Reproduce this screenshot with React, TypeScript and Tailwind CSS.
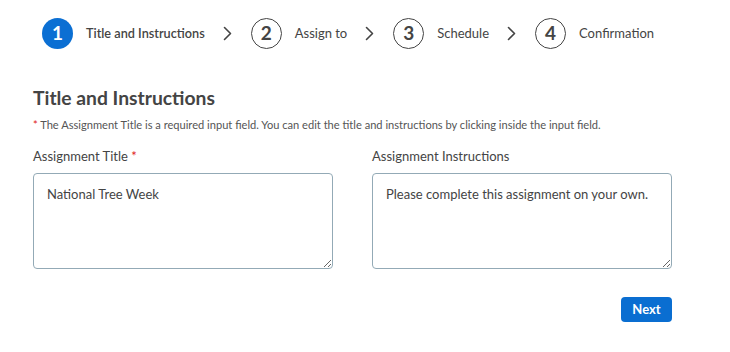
import React from 'react';

const steps = [
  { n: 1, label: 'Title and Instructions', active: true },
  { n: 2, label: 'Assign to', active: false },
  { n: 3, label: 'Schedule', active: false },
  { n: 4, label: 'Confirmation', active: false },
];

const Chevron = () => (
  <svg width="9" height="15" viewBox="0 0 9 15" className="ml-[18px] mr-[19px]">
    <path d="M1.5 1.5 L7.5 7.5 L1.5 13.5" fill="none" stroke="#444" strokeWidth="1.6" strokeLinecap="round" strokeLinejoin="round" />
  </svg>
);

const App: React.FC = () => {
  return (
    <div className="w-[730px] h-[352px] bg-white text-[#444]" style={{ fontFamily: 'Lato, "Open Sans", sans-serif' }}>
      <div className="w-[639px] ml-[33px] pt-[18px]">
        {/* stepper */}
        <div className="flex items-center ml-[9px]">
          {steps.map((s, i) => (
            <React.Fragment key={s.n}>
              <div className="flex items-center">
                <div
                  className={`w-[31px] h-[31px] rounded-full flex items-center justify-center text-[19px] font-bold ${
                    s.active ? 'bg-[#0b6fd3] text-white' : 'border-[1.5px] border-[#444] text-[#444]'
                  }`}
                >
                  {s.n}
                </div>
                <span className={`ml-[13px] ${s.active ? 'font-semibold text-[12.7px]' : 'text-[13px]'}`}>{s.label}</span>
              </div>
              {i < steps.length - 1 && <Chevron />}
            </React.Fragment>
          ))}
        </div>

        <h1 className="mt-[37px] text-[19.3px] font-bold leading-[24px]">Title and Instructions</h1>
        <p className="mt-[8px] text-[11.1px] leading-[14px] text-[#555]">
          <span className="text-[#e02020]">*</span> The Assignment Title is a required input field. You can edit the title and instructions by clicking inside the input field.
        </p>

        <div className="mt-[16px] grid grid-cols-[300px_300px] gap-x-[39px]">
          <div>
            <label className="block text-[13px] leading-[16px]">
              Assignment Title <span className="text-[#e02020]">*</span>
            </label>
            <textarea
              defaultValue="National Tree Week"
              className="mt-[9px] block w-[300px] h-[96px] border border-[#93aab6] rounded-[4px] px-[13px] py-[11px] text-[13px] text-[#444] outline-none"
              style={{ fontFamily: 'inherit' }}
            />
          </div>
          <div>
            <label className="block text-[13px] leading-[16px]">Assignment Instructions</label>
            <textarea
              defaultValue="Please complete this assignment on your own."
              className="mt-[9px] block w-[300px] h-[96px] border border-[#93aab6] rounded-[4px] px-[13px] py-[11px] text-[13px] text-[#444] outline-none"
              style={{ fontFamily: 'inherit' }}
            />
          </div>
        </div>

        <div className="flex justify-end mt-[28px]">
          <button className="w-[51px] h-[25px] rounded-[4px] bg-[#0a6ed1] text-white text-[13px] font-bold">Next</button>
        </div>
      </div>
    </div>
  );
};

export default App;
